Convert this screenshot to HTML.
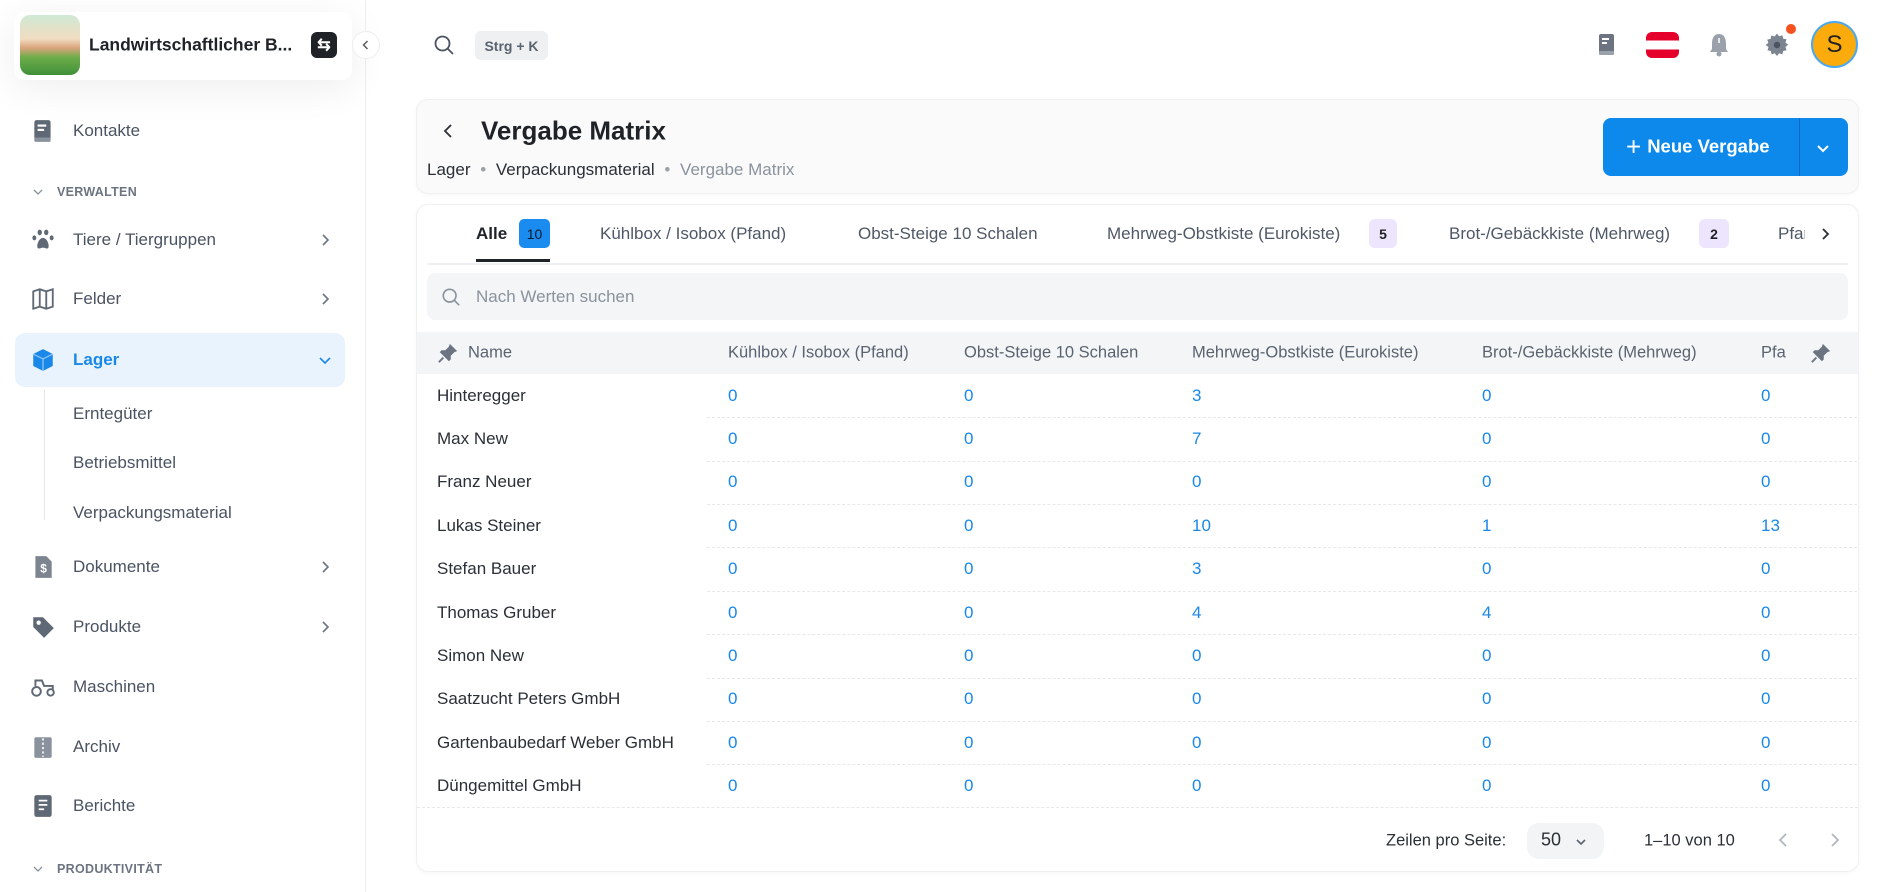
<!DOCTYPE html>
<html><head><meta charset="utf-8">
<style>
*{box-sizing:border-box;margin:0;padding:0}
body{width:1898px;height:892px;overflow:hidden;background:#fff;font-family:"Liberation Sans",sans-serif;color:#2b2f36;position:relative}
.abs{position:absolute}
.sb{position:absolute;left:0;top:0;width:366px;height:892px;background:#fff;border-right:1px solid #eceef1}
.nav{position:absolute;left:73px;font-size:17px;color:#4a5361;transform:translateY(-50%)}
.ico{position:absolute;left:30px;transform:translateY(-50%);width:26px;height:26px}
.chev{position:absolute;left:316px;transform:translateY(-50%);width:18px;height:18px}
.sec{position:absolute;left:57px;font-size:12.5px;color:#6b7480;font-weight:bold;letter-spacing:.3px;transform:translateY(-50%)}
.sub{position:absolute;left:73px;font-size:17px;color:#4a5361;transform:translateY(-50%)}
.card{position:absolute;background:#fff;border:1px solid #eef0f2;border-radius:12px;box-shadow:0 1px 4px rgba(0,0,0,.04)}
.tab{position:absolute;top:234px;transform:translateY(-50%);font-size:17px;color:#4f5866;white-space:nowrap}
.badge{position:absolute;top:219px;height:29px;border-radius:6px;font-size:14px;font-weight:bold;display:flex;align-items:center;justify-content:center}
.th{position:absolute;top:353px;transform:translateY(-50%);font-size:16.5px;color:#5a6370;white-space:nowrap}
.row{position:absolute;left:417px;width:1441px;height:43.4px}
.row div{position:absolute;top:50%;transform:translateY(-50%);font-size:17px;white-space:nowrap}
.row .n{left:20px;color:#2b2f36}
.row .v{color:#1a88e8}
.row .v:nth-child(2){left:311px}.row .v:nth-child(3){left:547px}.row .v:nth-child(4){left:775px}.row .v:nth-child(5){left:1065px}.row .v:nth-child(6){left:1344px}
.line{position:absolute;left:707px;width:1150px;border-top:1px dashed #e6e8eb}
</style></head><body>

<div class="sb">
  <div class="abs" style="left:14px;top:12px;width:338px;height:68px;background:#fff;border-radius:10px;box-shadow:0 8px 40px rgba(0,0,0,.07)"></div>
  <div class="abs" style="left:20px;top:15px;width:60px;height:60px;border-radius:10px;overflow:hidden;background:linear-gradient(#cfe9d4 0%,#f1dcc0 40%,#d9a37c 55%,#6fae4a 70%,#3f8f3a 100%)"></div>
  <div class="abs" style="left:89px;top:45px;transform:translateY(-50%);font-size:17.5px;font-weight:bold;color:#1f2328">Landwirtschaftlicher B...</div>
  <div class="abs" style="left:311px;top:32px;width:26px;height:26px;background:#1f2328;border-radius:6px;color:#fff;font-size:16px;display:flex;align-items:center;justify-content:center;font-weight:bold">⇆</div>
  <div class="abs" style="left:352px;top:31px;width:28px;height:28px;border-radius:50%;background:#fff;border:1px solid #eceef1;display:flex;align-items:center;justify-content:center;z-index:3">
    <svg width="12" height="12" viewBox="0 0 12 12"><path d="M7.5 2 L3.5 6 L7.5 10" stroke="#555" stroke-width="1.4" fill="none"/></svg></div>

  <svg class="ico" style="top:131px" viewBox="0 0 24 24"><rect x="4" y="2" width="15" height="18" rx="2" fill="#5f6875"/><rect x="4" y="18" width="15" height="4" rx="1" fill="#8a929d"/><rect x="7" y="6" width="8" height="2" fill="#fff"/><rect x="7" y="10" width="6" height="2" fill="#fff"/></svg>
  <div class="nav" style="top:131px">Kontakte</div>

  <svg class="abs" style="left:32px;top:186px" width="12" height="12" viewBox="0 0 12 12"><path d="M2 4 L6 8 L10 4" stroke="#8a929d" stroke-width="1.3" fill="none"/></svg>
  <div class="sec" style="top:192px">VERWALTEN</div>

  <svg class="ico" style="top:240px" viewBox="0 0 24 24" fill="#5f6875"><ellipse cx="9" cy="5" rx="2" ry="2.6"/><ellipse cx="15" cy="5" rx="2" ry="2.6"/><ellipse cx="4" cy="10" rx="1.8" ry="2.3"/><ellipse cx="20" cy="10" rx="1.8" ry="2.3"/><path d="M12 10 C8 10 6 17 7 19 C8 21 10 19 12 19 C14 19 16 21 17 19 C18 17 16 10 12 10Z"/></svg>
  <div class="nav" style="top:240px">Tiere / Tiergruppen</div>
  <svg class="chev" style="top:240px" viewBox="0 0 18 18"><path d="M7 4 L12 9 L7 14" stroke="#6b7480" stroke-width="1.6" fill="none"/></svg>

  <svg class="ico" style="top:299px" viewBox="0 0 24 24" fill="none" stroke="#5f6875" stroke-width="1.7"><path d="M3 5 L9 3 L15 5 L21 3 L21 19 L15 21 L9 19 L3 21Z M9 3 V19 M15 5 V21"/></svg>
  <div class="nav" style="top:299px">Felder</div>
  <svg class="chev" style="top:299px" viewBox="0 0 18 18"><path d="M7 4 L12 9 L7 14" stroke="#6b7480" stroke-width="1.6" fill="none"/></svg>

  <div class="abs" style="left:15px;top:333px;width:330px;height:54px;background:#e8f3fe;border-radius:10px"></div>
  <svg class="ico" style="top:360px" viewBox="0 0 24 24"><path d="M12 2 L21 6.5 L21 17.5 L12 22 L3 17.5 L3 6.5Z" fill="#1a88e8"/><path d="M3 6.5 L12 11 L21 6.5 M12 11 V22" stroke="#8cc4f5" stroke-width="1.2" fill="none"/></svg>
  <div class="nav" style="top:360px;color:#1a88e8;font-weight:bold">Lager</div>
  <svg class="chev" style="top:360px" viewBox="0 0 18 18"><path d="M4 7 L9 12 L14 7" stroke="#1a88e8" stroke-width="1.6" fill="none"/></svg>

  <div class="abs" style="left:44px;top:390px;height:130px;border-left:1px solid #e3e6ea"></div>
  <div class="sub" style="top:414px">Erntegüter</div>
  <div class="sub" style="top:463px">Betriebsmittel</div>
  <div class="sub" style="top:513px">Verpackungsmaterial</div>

  <svg class="ico" style="top:567px" viewBox="0 0 24 24"><path d="M5 2 H15 L20 7 V22 H5Z" fill="#7c8490"/><text x="12.5" y="17" font-size="11" fill="#fff" text-anchor="middle" font-family="Liberation Sans" font-weight="bold">$</text></svg>
  <div class="nav" style="top:567px">Dokumente</div>
  <svg class="chev" style="top:567px" viewBox="0 0 18 18"><path d="M7 4 L12 9 L7 14" stroke="#6b7480" stroke-width="1.6" fill="none"/></svg>

  <svg class="ico" style="top:627px" viewBox="0 0 24 24"><path d="M3 3 H12 L22 13 L13 22 L3 12Z" fill="#5f6875"/><circle cx="8" cy="8" r="2" fill="#fff"/></svg>
  <div class="nav" style="top:627px">Produkte</div>
  <svg class="chev" style="top:627px" viewBox="0 0 18 18"><path d="M7 4 L12 9 L7 14" stroke="#6b7480" stroke-width="1.6" fill="none"/></svg>

  <svg class="ico" style="top:687px" viewBox="0 0 24 24" fill="none" stroke="#5f6875" stroke-width="1.8"><circle cx="6" cy="16" r="4"/><circle cx="19" cy="17" r="3"/><path d="M5 11 V6 H11 L13 11 H21 V15"/></svg>
  <div class="nav" style="top:687px">Maschinen</div>

  <svg class="ico" style="top:747px" viewBox="0 0 24 24"><rect x="4" y="3" width="16" height="19" rx="1.5" fill="#8a929d"/><path d="M12 4 V21" stroke="#fff" stroke-width="1.5" stroke-dasharray="2 2"/></svg>
  <div class="nav" style="top:747px">Archiv</div>

  <svg class="ico" style="top:806px" viewBox="0 0 24 24"><rect x="4" y="2" width="16" height="20" rx="2" fill="#5f6875"/><path d="M8 7H16M8 11H16M8 15H13" stroke="#fff" stroke-width="1.6"/></svg>
  <div class="nav" style="top:806px">Berichte</div>

  <svg class="abs" style="left:32px;top:863px" width="12" height="12" viewBox="0 0 12 12"><path d="M2 4 L6 8 L10 4" stroke="#8a929d" stroke-width="1.3" fill="none"/></svg>
  <div class="sec" style="top:869px">PRODUKTIVITÄT</div>
</div>

<!-- topbar -->
<svg class="abs" style="left:433px;top:34px" width="22" height="22" viewBox="0 0 22 22" fill="none" stroke="#4a5361" stroke-width="1.8"><circle cx="9.5" cy="9.5" r="7"/><path d="M14.5 14.5 L20 20"/></svg>
<div class="abs" style="left:475px;top:31px;width:73px;height:29px;background:#eef0f2;border-radius:6px;font-size:14px;font-weight:bold;color:#5a6370;display:flex;align-items:center;justify-content:center">Strg + K</div>

<svg class="abs" style="left:1595px;top:32px" width="24" height="26" viewBox="0 0 24 26"><rect x="4" y="2" width="15" height="19" rx="2" fill="#6b7480"/><rect x="4" y="19" width="15" height="4" rx="1" fill="#9aa1ab"/><rect x="7" y="6" width="7" height="2" fill="#fff"/><rect x="7" y="10" width="5" height="2" fill="#fff"/></svg>
<div class="abs" style="left:1646px;top:32px;width:33px;height:26px;border-radius:6px;overflow:hidden;background:linear-gradient(#e4002b 0 33%,#fff 33% 67%,#e4002b 67%)"></div>
<svg class="abs" style="left:1707px;top:32px" width="24" height="26" viewBox="0 0 24 26"><path d="M12 2 C6 2 5 8 5 12 V17 L3 20 H21 L19 17 V12 C19 8 18 2 12 2Z" fill="#9aa1ab"/><circle cx="12" cy="22" r="2.5" fill="#9aa1ab"/><path d="M12 6 V11" stroke="#fff" stroke-width="1.5"/></svg>
<svg class="abs" style="left:1764px;top:32px" width="26" height="26" viewBox="0 0 24 24"><path d="M12 1.5l2 2.5 3-1 .7 3.1 3.1.7-1 3 2.5 2-2.5 2 1 3-3.1.7-.7 3.1-3-1-2 2.5-2-2.5-3 1-.7-3.1-3.1-.7 1-3L1.5 12 4 10 3 7l3.1-.7L6.8 3.2l3 1z" fill="#7c8490"/><circle cx="12" cy="12" r="3" fill="#4a5361"/></svg>
<div class="abs" style="left:1786px;top:24px;width:10px;height:10px;border-radius:50%;background:#f4511e"></div>
<div class="abs" style="left:1811px;top:21px;width:47px;height:47px;border-radius:50%;border:2px solid #4aa8f0;background:#fbab0b;display:flex;align-items:center;justify-content:center;font-size:24px;color:#222">S</div>

<!-- header card -->
<div class="card" style="left:416px;top:99px;width:1443px;height:95px;background:#fafafa"></div>
<svg class="abs" style="left:440px;top:122px" width="18" height="18" viewBox="0 0 18 18"><path d="M11 3 L5 9 L11 15" stroke="#2b2f36" stroke-width="1.8" fill="none"/></svg>
<div class="abs" style="left:481px;top:131px;transform:translateY(-50%);font-size:26px;font-weight:bold;color:#1f2328">Vergabe Matrix</div>
<div class="abs" style="left:427px;top:170px;transform:translateY(-50%);font-size:17px;color:#2b2f36;white-space:nowrap">Lager <span style="color:#9aa1ab;margin:0 5px">•</span> Verpackungsmaterial <span style="color:#9aa1ab;margin:0 5px">•</span> <span style="color:#8a929d">Vergabe Matrix</span></div>
<div class="abs" style="left:1603px;top:118px;width:245px;height:58px;background:#0d88eb;border-radius:8px"></div>
<div class="abs" style="left:1799px;top:118px;width:1px;height:58px;background:#0a6cc0"></div>
<div class="abs" style="left:1626px;top:147px;transform:translateY(-50%);color:#fff;font-size:18.5px;font-weight:bold;white-space:nowrap"><span style="font-size:26px;font-weight:normal;vertical-align:-3px;margin-right:6px">+</span>Neue Vergabe</div>
<svg class="abs" style="left:1814px;top:139px" width="18" height="18" viewBox="0 0 18 18"><path d="M4 7 L9 12 L14 7" stroke="#fff" stroke-width="2" fill="none"/></svg>

<!-- table card -->
<div class="card" style="left:416px;top:204px;width:1443px;height:668px"></div>
<div class="abs" style="left:427px;top:263px;width:1421px;border-top:2px solid #eef0f2"></div>
<div class="tab" style="left:476px;color:#1f2328;font-weight:bold">Alle</div>
<div class="badge" style="left:519px;width:31px;border-radius:5px;font-weight:normal;color:#0b1a2a;background:#1a8cf0">10</div>
<div class="abs" style="left:476px;top:259px;width:74px;height:3px;background:#1f2328"></div>
<div class="tab" style="left:600px">Kühlbox / Isobox (Pfand)</div>
<div class="tab" style="left:858px">Obst-Steige 10 Schalen</div>
<div class="tab" style="left:1107px">Mehrweg-Obstkiste (Eurokiste)</div>
<div class="badge" style="left:1369px;width:28px;background:#ede4fd;color:#222">5</div>
<div class="tab" style="left:1449px">Brot-/Gebäckkiste (Mehrweg)</div>
<div class="badge" style="left:1699px;width:30px;background:#ede4fd;color:#222">2</div>
<div class="tab" style="left:1778px;width:27px;overflow:hidden">Pfand</div>
<svg class="abs" style="left:1816px;top:225px" width="18" height="18" viewBox="0 0 18 18"><path d="M7 4 L12 9 L7 14" stroke="#2b2f36" stroke-width="1.8" fill="none"/></svg>

<div class="abs" style="left:427px;top:273px;width:1421px;height:47px;background:#f4f5f7;border-radius:8px"></div>
<svg class="abs" style="left:441px;top:287px" width="20" height="20" viewBox="0 0 22 22" fill="none" stroke="#8a929d" stroke-width="1.8"><circle cx="9.5" cy="9.5" r="7"/><path d="M14.5 14.5 L20 20"/></svg>
<div class="abs" style="left:476px;top:297px;transform:translateY(-50%);font-size:17px;color:#8a929d">Nach Werten suchen</div>

<div class="abs" style="left:417px;top:332px;width:1441px;height:42px;background:#f4f5f7"></div>
<svg class="abs" style="left:437px;top:342px" width="22" height="22" viewBox="0 0 24 24"><path d="M14 2 L22 10 L19 11 L15 15 L15 19 L13 21 L3 11 L5 9 L9 9 L13 5Z" fill="#6b7480"/><path d="M7 17 L2 22" stroke="#6b7480" stroke-width="2"/></svg>
<div class="th" style="left:468px">Name</div>
<div class="th" style="left:728px">Kühlbox / Isobox (Pfand)</div>
<div class="th" style="left:964px">Obst-Steige 10 Schalen</div>
<div class="th" style="left:1192px">Mehrweg-Obstkiste (Eurokiste)</div>
<div class="th" style="left:1482px">Brot-/Gebäckkiste (Mehrweg)</div>
<div class="th" style="left:1761px">Pfa</div>
<svg class="abs" style="left:1810px;top:342px" width="22" height="22" viewBox="0 0 24 24"><path d="M14 2 L22 10 L19 11 L15 15 L15 19 L13 21 L3 11 L5 9 L9 9 L13 5Z" fill="#6b7480"/><path d="M7 17 L2 22" stroke="#6b7480" stroke-width="2"/></svg>

<div class="row" style="top:374px"><div class="n">Hinteregger</div><div class="v">0</div><div class="v">0</div><div class="v">3</div><div class="v">0</div><div class="v">0</div></div>
<div class="line" style="top:417px"></div>
<div class="row" style="top:417.4px"><div class="n">Max New</div><div class="v">0</div><div class="v">0</div><div class="v">7</div><div class="v">0</div><div class="v">0</div></div>
<div class="line" style="top:461px"></div>
<div class="row" style="top:460.8px"><div class="n">Franz Neuer</div><div class="v">0</div><div class="v">0</div><div class="v">0</div><div class="v">0</div><div class="v">0</div></div>
<div class="line" style="top:504px"></div>
<div class="row" style="top:504.2px"><div class="n">Lukas Steiner</div><div class="v">0</div><div class="v">0</div><div class="v">10</div><div class="v">1</div><div class="v">13</div></div>
<div class="line" style="top:547px"></div>
<div class="row" style="top:547.6px"><div class="n">Stefan Bauer</div><div class="v">0</div><div class="v">0</div><div class="v">3</div><div class="v">0</div><div class="v">0</div></div>
<div class="line" style="top:591px"></div>
<div class="row" style="top:591px"><div class="n">Thomas Gruber</div><div class="v">0</div><div class="v">0</div><div class="v">4</div><div class="v">4</div><div class="v">0</div></div>
<div class="line" style="top:634px"></div>
<div class="row" style="top:634.4px"><div class="n">Simon New</div><div class="v">0</div><div class="v">0</div><div class="v">0</div><div class="v">0</div><div class="v">0</div></div>
<div class="line" style="top:678px"></div>
<div class="row" style="top:677.8px"><div class="n">Saatzucht Peters GmbH</div><div class="v">0</div><div class="v">0</div><div class="v">0</div><div class="v">0</div><div class="v">0</div></div>
<div class="line" style="top:721px"></div>
<div class="row" style="top:721.2px"><div class="n">Gartenbaubedarf Weber GmbH</div><div class="v">0</div><div class="v">0</div><div class="v">0</div><div class="v">0</div><div class="v">0</div></div>
<div class="line" style="top:764px"></div>
<div class="row" style="top:764.6px"><div class="n">Düngemittel GmbH</div><div class="v">0</div><div class="v">0</div><div class="v">0</div><div class="v">0</div><div class="v">0</div></div>
<div class="abs" style="left:417px;top:807px;width:1441px;border-top:1px dashed #e6e8eb"></div>

<div class="abs" style="left:1386px;top:841px;transform:translateY(-50%);font-size:16.5px;color:#2b2f36">Zeilen pro Seite:</div>
<div class="abs" style="left:1527px;top:823px;width:77px;height:36px;background:#f2f4f6;border-radius:12px"></div>
<div class="abs" style="left:1541px;top:840px;transform:translateY(-50%);font-size:18px;color:#2b2f36">50</div>
<svg class="abs" style="left:1574px;top:835px" width="14" height="14" viewBox="0 0 14 14"><path d="M3 5 L7 9 L11 5" stroke="#5a6370" stroke-width="1.6" fill="none"/></svg>
<div class="abs" style="left:1644px;top:841px;transform:translateY(-50%);font-size:16.5px;color:#2b2f36">1–10 von 10</div>
<svg class="abs" style="left:1775px;top:831px" width="18" height="18" viewBox="0 0 18 18"><path d="M11 3 L5 9 L11 15" stroke="#b0b6bf" stroke-width="1.8" fill="none"/></svg>
<svg class="abs" style="left:1825px;top:831px" width="18" height="18" viewBox="0 0 18 18"><path d="M7 3 L13 9 L7 15" stroke="#b0b6bf" stroke-width="1.8" fill="none"/></svg>
</body></html>
